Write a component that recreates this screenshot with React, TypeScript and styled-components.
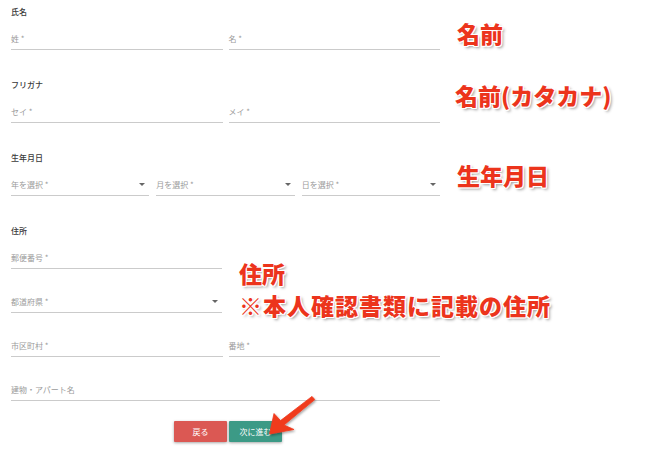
import React from "react";
import styled, { createGlobalStyle } from "styled-components";

const Global = createGlobalStyle`
  html, body { margin: 0; padding: 0; background: #fff; }
  body { font-family: "Noto Sans CJK JP", "Noto Sans", sans-serif; }
`;

const Page = styled.div`
  position: relative;
  width: 650px;
  height: 450px;
  overflow: hidden;
  background: #fff;
`;

const Form = styled.div`
  width: 429px;
  padding: 6px 0 0 11px;
  display: flex;
  flex-direction: column;
`;

const Section = styled.div`
  display: flex;
  flex-direction: column;
  margin-bottom: 29px;
`;

const SectionLabel = styled.div`
  font-size: 8px;
  line-height: 12px;
  height: 12px;
  color: #3a3a3a;
  font-weight: 500;
  margin-bottom: 10px;
`;

const Fields = styled.div`
  display: flex;
  flex-direction: column;
  gap: 22px;
`;

const Row = styled.div<{ $cols: number; $gap: number; $half?: boolean }>`
  display: grid;
  grid-template-columns: repeat(${(p) => p.$cols}, 1fr);
  column-gap: ${(p) => p.$gap}px;
  width: ${(p) => (p.$half ? "211px" : "100%")};
`;

const Field = styled.div`
  height: 21px;
  border-bottom: 1px solid #cbcbcb;
  display: flex;
  align-items: center;
  justify-content: space-between;
  font-size: 8px;
  color: #9b9b9b;
  padding-right: 4px;
`;

const Caret = styled.span`
  width: 0;
  height: 0;
  border-left: 3px solid transparent;
  border-right: 3px solid transparent;
  border-top: 3px solid #666;
`;

const Buttons = styled.div`
  display: flex;
  justify-content: center;
  gap: 2px;
  padding-left: 5px;
  margin-top: -9px;
`;

const Button = styled.div<{ $bg: string }>`
  width: 53px;
  height: 21px;
  background: ${(p) => p.$bg};
  color: #fff;
  font-size: 8px;
  display: flex;
  align-items: center;
  justify-content: center;
  box-shadow: 0 1px 3px rgba(0, 0, 0, 0.35);
  border-radius: 1px;
`;

const Note = styled.div<{ $x: number; $y: number; $ls?: number }>`
  position: absolute;
  left: ${(p) => p.$x}px;
  top: ${(p) => p.$y}px;
  color: #ec341c;
  font-size: 23px;
  line-height: 28px;
  font-weight: 900;
  letter-spacing: ${(p) => p.$ls ?? 0}px;
  white-space: nowrap;
  text-shadow: 1px 0 0 #fff, -1px 0 0 #fff, 0 1px 0 #fff, 0 -1px 0 #fff,
    1px 1px 0 #fff, -1px -1px 0 #fff, 1px -1px 0 #fff, -1px 1px 0 #fff,
    2px 2px 3px rgba(0, 0, 0, 0.4);
`;

const Overlay = styled.svg`
  position: absolute;
  left: 0;
  top: 0;
  pointer-events: none;
`;

function Input({ label, select }: { label: string; select?: boolean }) {
  return (
    <Field>
      <span>{label}</span>
      {select && <Caret />}
    </Field>
  );
}

export default function App() {
  return (
    <Page>
      <Global />
      <Form>
        <Section>
          <SectionLabel>氏名</SectionLabel>
          <Fields>
            <Row $cols={2} $gap={6}>
              <Input label="姓 *" />
              <Input label="名 *" />
            </Row>
          </Fields>
        </Section>
        <Section>
          <SectionLabel>フリガナ</SectionLabel>
          <Fields>
            <Row $cols={2} $gap={6}>
              <Input label="セイ *" />
              <Input label="メイ *" />
            </Row>
          </Fields>
        </Section>
        <Section>
          <SectionLabel>生年月日</SectionLabel>
          <Fields>
            <Row $cols={3} $gap={7}>
              <Input label="年を選択 *" select />
              <Input label="月を選択 *" select />
              <Input label="日を選択 *" select />
            </Row>
          </Fields>
        </Section>
        <Section>
          <SectionLabel>住所</SectionLabel>
          <Fields>
            <Row $cols={1} $gap={0} $half>
              <Input label="郵便番号 *" />
            </Row>
            <Row $cols={1} $gap={0} $half>
              <Input label="都道府県 *" select />
            </Row>
            <Row $cols={2} $gap={6}>
              <Input label="市区町村 *" />
              <Input label="番地 *" />
            </Row>
            <Row $cols={1} $gap={0}>
              <Input label="建物・アパート名" />
            </Row>
          </Fields>
        </Section>
        <Buttons>
          <Button $bg="#db5853">戻る</Button>
          <Button $bg="#3c9a86">次に進む</Button>
        </Buttons>
      </Form>

      <Note $x={457} $y={19}>名前</Note>
      <Note $x={455} $y={81}>名前(カタカナ)</Note>
      <Note $x={457} $y={161}>生年月日</Note>
      <Note $x={239} $y={259}>住所</Note>
      <Note $x={239} $y={291} $ls={1}>※本人確認書類に記載の住所</Note>

      <Overlay width="650" height="450" viewBox="0 0 650 450">
        <defs>
          <filter id="sh" x="-20%" y="-20%" width="140%" height="140%">
            <feDropShadow dx="1" dy="1.5" stdDeviation="1.2" floodColor="#000" floodOpacity="0.35" />
          </filter>
        </defs>
        <polygon
          points="312,396.4 314.8,399.6 284,425 294,429.5 269.5,434 274,413.5 280.5,420.6"
          fill="#f03a1e"
          stroke="#f03a1e"
          strokeWidth="0.8"
          strokeLinejoin="round"
          filter="url(#sh)"
        />
      </Overlay>
    </Page>
  );
}
